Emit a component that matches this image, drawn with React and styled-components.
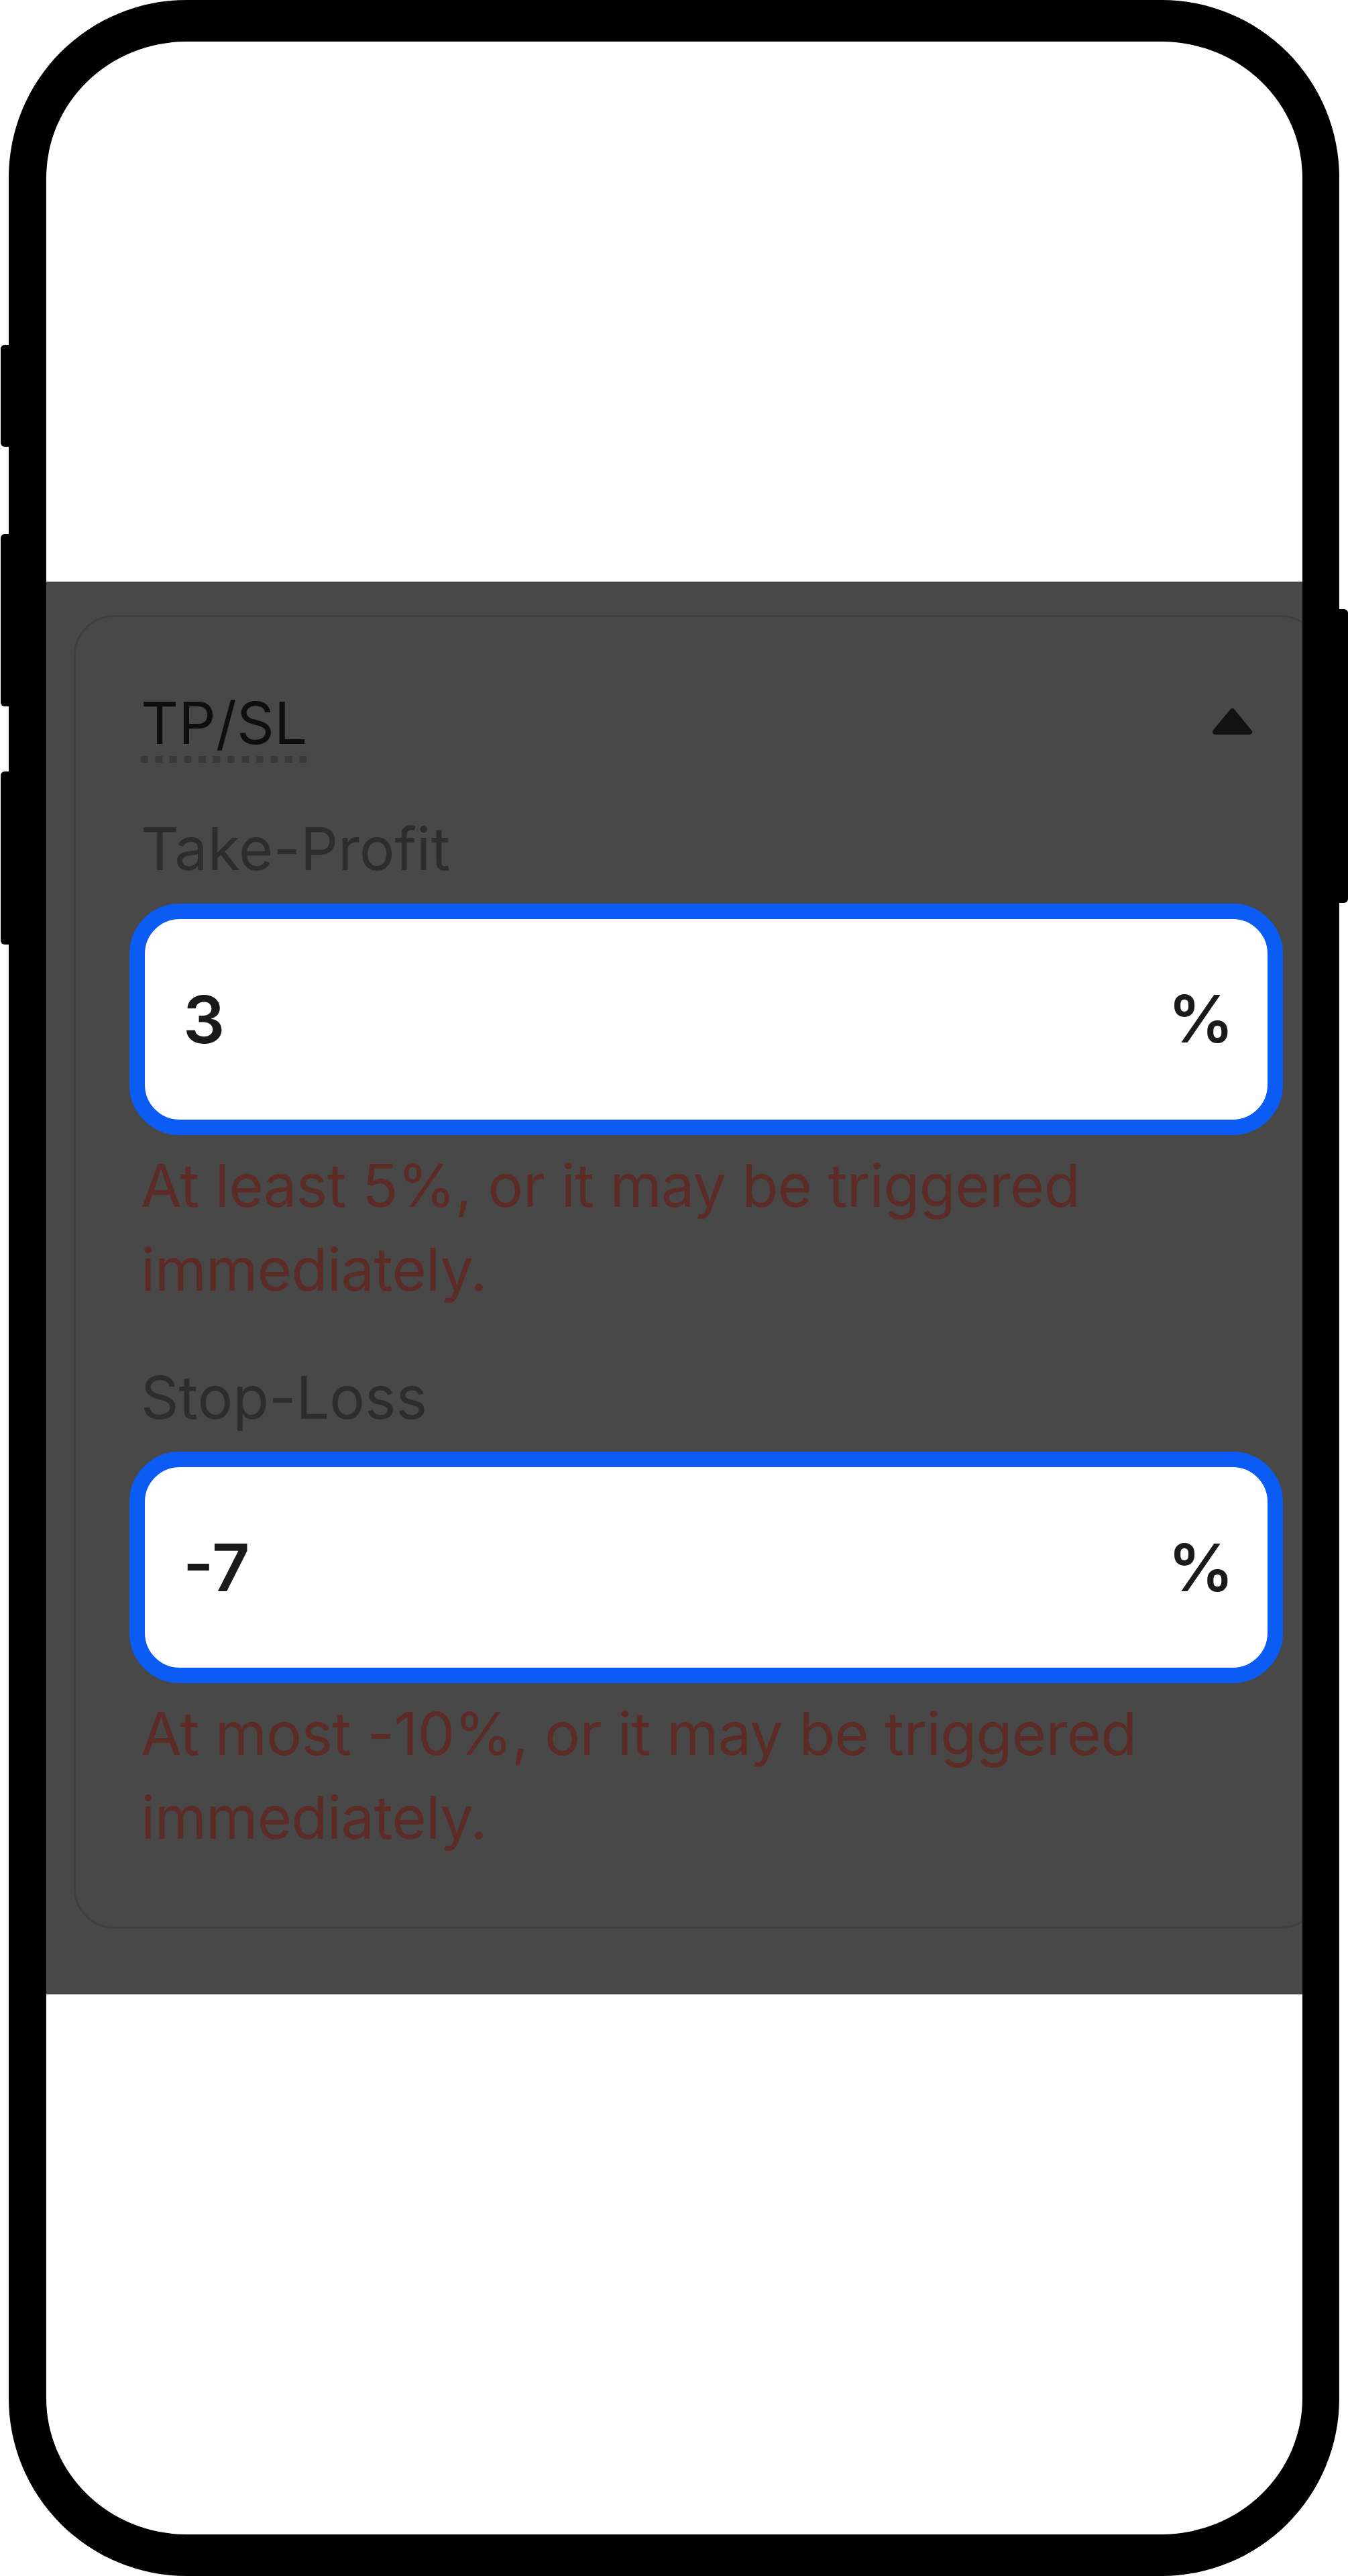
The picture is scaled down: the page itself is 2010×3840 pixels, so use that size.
import React from 'react'
import styled, { createGlobalStyle } from 'styled-components'

const GlobalStyle = createGlobalStyle`
    html, body {
        margin: 0;
        padding: 0;
        background: #ffffff;
    }
    body {
        font-family: Inter, "Liberation Sans", Roboto, sans-serif;
    }
`;

const Stage = styled.div`
    width: 2010px;
    height: 3840px;
    overflow: hidden;
`;

const Phone = styled.div`
    position: relative;
    box-sizing: border-box;
    margin-left: 13px;
    width: 1984px;
    height: 3840px;
    border-style: solid;
    border-color: #000;
    border-width: 62px 55px 62px 56px;
    border-radius: 265px;
    background: #fff;
`;

// hardware keys on the frame edge
const SideKey = styled.div`
    position: absolute;
    top: ${p => p.$top}px;
    height: ${p => p.$h}px;
    width: 13px;
    background: #000;
    ${p => p.$right
        ? 'right: -68px; border-radius: 0 6px 6px 0;'
        : 'left: -68px; border-radius: 6px 0 0 6px;'}
`;

const Screen = styled.div`
    height: 100%;
    display: flex;
    flex-direction: column;
    justify-content: center;
    overflow: hidden;
    border-radius: 205px;
`;

const Backdrop = styled.div`
    flex-shrink: 0;
    background: #484848;
    padding: 50px 0 98px 41px;
`;

const Card = styled.div`
    box-sizing: border-box;
    width: 1860px;
    border: 3px solid #3f3f3f;
    border-radius: 60px;
    padding: 106px 100px 100px 97px;
`;

const Header = styled.div`
    display: flex;
    justify-content: space-between;
    align-items: flex-start;
`;

const Title = styled.span`
    display: inline-block;
    font-size: 87px;
    line-height: 1.2;
    color: #0e0e0e;
    padding-bottom: 7px;
    background-image: linear-gradient(to right, #393939 11px, transparent 11px);
    background-size: 21.5px 10px;
    background-repeat: repeat-x;
    background-position: left bottom;
`;

const Caret = styled.svg`
    margin-top: 30px;
    width: 59px;
    height: 39px;
`;

const Label = styled.div`
    margin-top: 76px;
    font-size: 88px;
    line-height: 1.2;
    color: #2d2d2d;
`;

const Field = styled.div`
    box-sizing: border-box;
    margin: 28px 0 0 -17px;
    width: 1720px;
    height: 345px;
    border: 23px solid #0a5cf5;
    border-radius: 75px;
    background: #fff;
    display: flex;
    align-items: center;
    padding: 0 50px 0 57px;
    font-size: 98px;
    font-weight: 600;
    color: #1a1a1a;
`;

const ValueInput = styled.input`
    flex: 1;
    min-width: 0;
    border: none;
    outline: none;
    background: transparent;
    padding: 0;
    font: inherit;
    color: inherit;
`;

const Unit = styled.span`
    line-height: 1;
`;

const Hint = styled.p`
    margin: 13px 0 0;
    font-size: 88px;
    line-height: 125px;
    letter-spacing: -0.6px;
    color: #5c2b25;
`;

const fields = [
    { label: 'Take-Profit', value: '3', hint: 'At least 5%, or it may be triggered immediately.' },
    { label: 'Stop-Loss', value: '-7', hint: 'At most -10%, or it may be triggered immediately.' },
];

export default function App() {
    return (
        <Stage>
            <GlobalStyle />
            <Phone>
                <SideKey $top={452} $h={152} />
                <SideKey $top={734} $h={257} />
                <SideKey $top={1088} $h={258} />
                <SideKey $right $top={846} $h={438} />
                <Screen>
                    <Backdrop>
                        <Card>
                            <Header>
                                <Title>TP/SL</Title>
                                <Caret viewBox="0 0 59 39">
                                    <polygon
                                        points="29.5,4 55,35 4,35"
                                        fill="#121212"
                                        stroke="#121212"
                                        strokeWidth="8"
                                        strokeLinejoin="round"
                                    />
                                </Caret>
                            </Header>
                            {fields.map(f => (
                                <div key={f.label}>
                                    <Label>{f.label}</Label>
                                    <Field>
                                        <ValueInput defaultValue={f.value} />
                                        <Unit>%</Unit>
                                    </Field>
                                    <Hint>{f.hint}</Hint>
                                </div>
                            ))}
                        </Card>
                    </Backdrop>
                </Screen>
            </Phone>
        </Stage>
    )
}
